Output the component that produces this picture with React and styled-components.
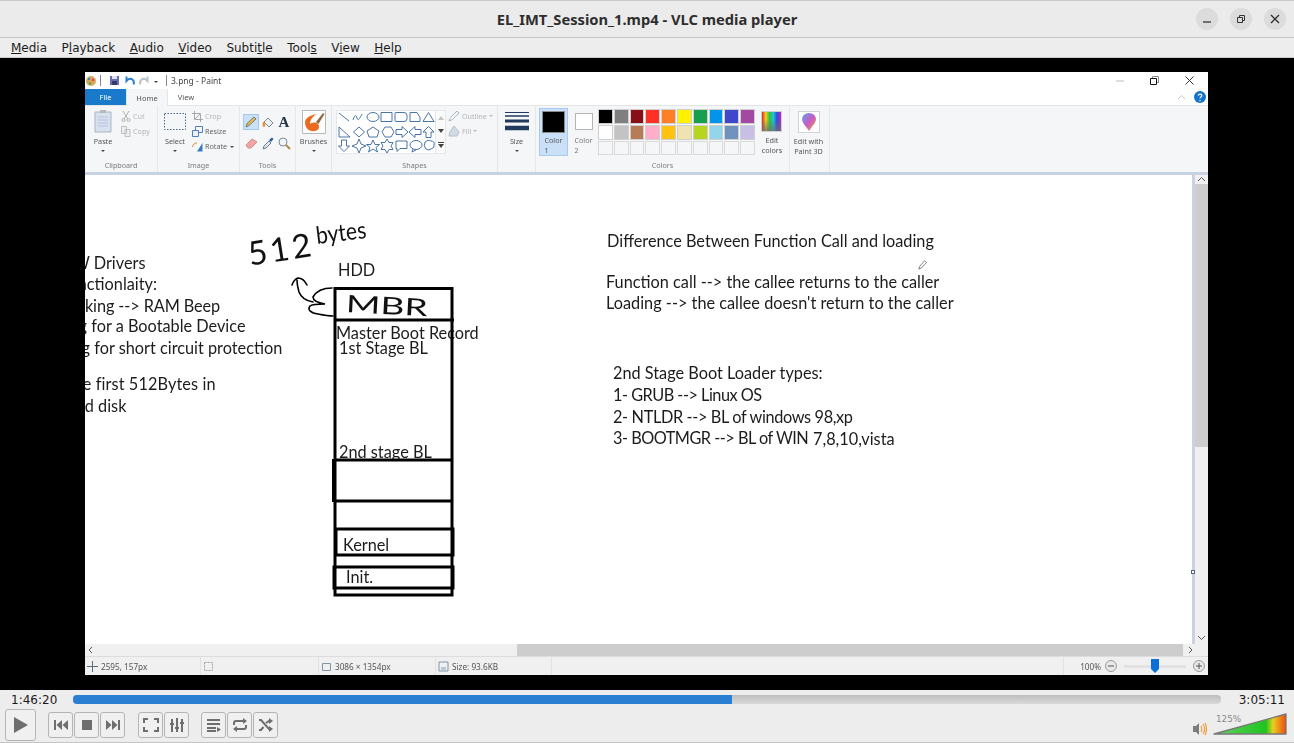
import React from 'react';
import styled, { createGlobalStyle } from 'styled-components';

const GlobalStyle = createGlobalStyle`
  html, body { margin: 0; padding: 0; background: #000; }
  body { width: 1294px; height: 743px; overflow: hidden; font-family: "DejaVu Sans", sans-serif; }
`;

const Player = styled.div`
  width: 1294px;
  height: 743px;
  display: flex;
  flex-direction: column;
  background: #ededed;
`;

/* ---- VLC window chrome ---- */
const TitleBar = styled.header`
  height: 38px;
  flex: none;
  box-sizing: border-box;
  border-top: 1px solid #c9c9c9;
  border-bottom: 1px solid #c4c4c4;
  background: #ebebeb;
  display: flex;
  align-items: center;
  justify-content: flex-end;
  position: relative;
  padding-right: 8px;
  gap: 12px;
`;
const WindowTitle = styled.div`
  position: absolute;
  left: 0;
  right: 0;
  text-align: center;
  font: bold 14.7px "Noto Sans", sans-serif;
  color: #2e2e2e;
`;
const RoundButton = styled.button`
  width: 22px;
  height: 22px;
  padding: 0;
  border: 0;
  border-radius: 50%;
  background: #dcdcdc;
  display: flex;
  align-items: center;
  justify-content: center;
`;
const MenuBar = styled.nav`
  height: 20px;
  flex: none;
  box-sizing: border-box;
  padding: 0 0 0 11px;
  display: flex;
  align-items: center;
  gap: 14.5px;
  background: #ededed;
  border-bottom: 1px solid #c8c8c8;
  font-size: 12px;
  color: #1c1c1c;
`;
const VideoArea = styled.main`
  flex: none;
  height: 632px;
  background: #000;
  box-sizing: border-box;
  padding: 14px 86px 15px 85px;
`;

/* ---- Paint window inside the video ---- */
const PaintWindow = styled.div`
  height: 100%;
  background: #fff;
  display: flex;
  flex-direction: column;
  font-family: "Noto Sans", sans-serif;
  filter: blur(0.3px);
  overflow: hidden;
`;
const QuickBar = styled.div`
  height: 17px;
  flex: none;
  display: flex;
  align-items: center;
  gap: 4px;
  font-size: 8.5px;
  color: #444;
`;
const QuickSep = styled.span`
  width: 1px;
  height: 11px;
  background: #888;
  margin: 0 ${p => p.$r}px 0 ${p => p.$l}px;
`;
const PaintTitle = styled.span`
  flex: 1;
`;
const PaintCtrls = styled.div`
  display: flex;
  align-items: center;
  gap: 26px;
  padding-right: 14px;
`;
const TabRow = styled.div`
  height: 17px;
  flex: none;
  display: flex;
  align-items: stretch;
  font-size: 7.5px;
  color: #555;
  border-bottom: 1px solid #e4e5e6;
  box-sizing: border-box;
`;
const Tab = styled.div`
  width: ${p => p.$w}px;
  display: flex;
  align-items: center;
  justify-content: center;
  background: ${p => (p.$file ? '#1979ca' : p.$active ? '#f5f6f7' : '#fff')};
  color: ${p => (p.$file ? '#fff' : '#555')};
  ${p => p.$active && 'border: 1px solid #e4e5e6; border-bottom: 0; border-top: 0; margin-bottom: -1px;'}
`;
const TabFill = styled.div`
  flex: 1;
  display: flex;
  align-items: center;
  justify-content: flex-end;
  gap: 8px;
  padding-right: 2px;
`;
const Ribbon = styled.div`
  height: 66px;
  flex: none;
  display: flex;
  background: #f5f6f7;
  border-bottom: 3px solid #c9d2e0;
  box-sizing: content-box;
`;
const Group = styled.section`
  width: ${p => p.$w}px;
  flex: none;
  box-sizing: border-box;
  border-right: 1px solid #e6e7e8;
  display: flex;
  flex-direction: column;
  position: relative;
`;
const GroupBody = styled.div`
  flex: 1;
  display: flex;
  padding: ${p => p.$pad || '2px 0 0 0'};
  min-height: 0;
`;
const GroupLabel = styled.div`
  height: 12px;
  line-height: 11px;
  text-align: center;
  font-size: 7.2px;
  color: #7b7b7b;
`;
const BigTool = styled.div`
  width: ${p => p.$w || 36}px;
  padding-top: ${p => p.$top || 0}px;
  display: flex;
  flex-direction: column;
  align-items: center;
  font-size: 7.2px;
  line-height: 9.5px;
  color: #555;
  text-align: center;
`;
const BigIcon = styled.div`
  height: 27px;
  display: flex;
  align-items: center;
  justify-content: center;
  margin-bottom: 2px;
`;
const LabelGap = styled.div`
  height: 4px;
  flex: none;
`;
const Caret = styled.span`
  display: block;
  flex: none;
  width: 0;
  height: 0;
  margin: ${p => p.$m || '3px auto 0'};
  border-left: 2px solid transparent;
  border-right: 2px solid transparent;
  border-top: 2px solid ${p => p.$c || '#444'};
`;
const SmallColumn = styled.div`
  display: flex;
  flex-direction: column;
  gap: 1px;
  padding-top: ${p => p.$top}px;
  margin-left: ${p => p.$ml || 0}px;
`;
const SmallTool = styled.div`
  height: 14px;
  display: flex;
  align-items: center;
  gap: 2px;
  font-size: 7.2px;
  color: ${p => (p.$off ? '#b4b4b4' : '#666')};
  white-space: nowrap;
`;
const ToolsGrid = styled.div`
  display: grid;
  grid-template-columns: 18px 16px 16px;
  grid-auto-rows: 17px;
  row-gap: 4px;
  padding: 7.5px 0 0 2px;
  justify-items: center;
  align-items: center;
`;
const PencilBox = styled.div`
  width: 16px;
  height: 16px;
  background: #c9e0f7;
  border: 1px solid #a3c8ec;
  box-sizing: border-box;
  display: flex;
  align-items: center;
  justify-content: center;
`;
const TextGlyph = styled.span`
  font: bold 15px "Liberation Serif", serif;
  color: #24344a;
`;
const Gallery = styled.div`
  width: 100px;
  height: 44px;
  background: #fff;
  border: 1px solid #e4e8ee;
  box-sizing: border-box;
  margin: 4px 0 0 4px;
`;
const GalleryScroll = styled.div`
  width: 10px;
  height: 44px;
  margin-top: 4px;
  background: #fafafa;
  border: 1px solid #e8e8e8;
  border-left: 0;
  box-sizing: border-box;
  display: flex;
  flex-direction: column;
  align-items: center;
  justify-content: space-around;
`;
const ColorOne = styled.div`
  width: 29px;
  height: 48px;
  margin: 2px 0 0 3px;
  box-sizing: border-box;
  background: #c9e0f7;
  border: 1px solid #a7cbee;
  display: flex;
  flex-direction: column;
  align-items: center;
  font-size: 7.2px;
  line-height: 10px;
  color: #555;
`;
const ColorTwo = styled(ColorOne)`
  width: 27px;
  margin-left: 2px;
  background: none;
  border-color: transparent;
  color: #777;
`;
const ColorPreview = styled.div`
  width: ${p => p.$s}px;
  height: ${p => p.$s}px;
  box-sizing: border-box;
  margin: ${p => (p.$s > 20 ? 2 : 4)}px 0 ${p => (p.$s > 20 ? 2 : 5)}px;
  background: ${p => p.$c};
  border: 1px solid ${p => (p.$s > 20 ? '#8a8a8a' : '#b5b5b5')};
`;
const Palette = styled.div`
  display: grid;
  grid-template-columns: repeat(10, 14.8px);
  grid-auto-rows: 14.8px;
  gap: 1px;
  margin: 3px 0 0 1px;
`;
const Swatch = styled.div`
  background: ${p => p.$c};
  border: 1px solid ${p => (p.$c === '#f5f6f7' ? '#d9d9d9' : '#cfcfcf')};
  box-sizing: border-box;
`;
const Rainbow = styled.div`
  width: 21px;
  height: 21px;
  flex: none;
  box-sizing: border-box;
  border: 1px solid #cfcfcf;
  background: linear-gradient(180deg, rgba(255,255,255,0) 40%, rgba(110,110,110,.75) 100%),
    linear-gradient(90deg, #e0242c, #f2d21c, #2bc13d, #1fc2d8, #3048d8, #c428c0);
`;
const Tile3D = styled.div`
  width: 22px;
  height: 22px;
  flex: none;
  box-sizing: border-box;
  background: #fff;
  border: 1px solid #d4d4d4;
  display: flex;
  align-items: center;
  justify-content: center;
`;

/* ---- Paint canvas ---- */
const Workspace = styled.div`
  flex: 1;
  min-height: 0;
  display: grid;
  grid-template-columns: 1fr 13px;
  background: #c9d2e0;
`;
const Viewport = styled.div`
  display: flex;
  flex-direction: column;
  min-height: 0;
`;
const CanvasClip = styled.div`
  flex: 1;
  min-height: 0;
  padding-right: 3px;
  position: relative;
`;
const Canvas = styled.div`
  position: relative;
  height: 100%;
  background: #fff;
  overflow: hidden;
  font-family: Lato, sans-serif;
  font-size: 16.3px;
  line-height: 20px;
  color: #1c1c1c;
`;
const Note = styled.div`
  position: absolute;
  left: ${p => p.$x}px;
  top: ${p => p.$y}px;
  white-space: nowrap;
  letter-spacing: ${p => p.$ls || 0}px;
`;
const Sketch = styled.svg`
  position: absolute;
  left: 0;
  top: 0;
`;
const PenCursor = styled.svg`
  position: absolute;
  left: 833px;
  top: 85px;
`;
const Scribble = styled.div`
  position: absolute;
  left: ${p => p.$x}px;
  top: ${p => p.$y}px;
  font: 400 ${p => p.$size}px/1 "Lato", sans-serif;
  color: #111;
  white-space: nowrap;
  transform: rotate(${p => p.$rot}deg) scaleX(${p => p.$sx || 1});
  transform-origin: left center;
  letter-spacing: ${p => p.$ls || 0}px;
`;
const Handle = styled.span`
  position: absolute;
  right: 0;
  top: 395px;
  width: 2px;
  height: 2px;
  background: #fff;
  border: 1px solid #55657a;
`;
const HScroll = styled.div`
  height: 12px;
  flex: none;
  background: #f0f0f0;
  display: flex;
  align-items: center;
  justify-content: space-between;
  position: relative;
  padding: 0 3px;
`;
const HThumb = styled.div`
  position: absolute;
  left: 432px;
  width: 666px;
  top: 0;
  bottom: 0;
  background: #cdcdcd;
`;
const VScroll = styled.div`
  background: #f0f0f0;
  display: flex;
  flex-direction: column;
  align-items: center;
  position: relative;
`;
const VThumb = styled.div`
  width: 100%;
  height: ${p => p.$h}px;
  background: #cdcdcd;
`;
const Ico = ({ w = 12, h = 12, children, ...rest }) => (
  <svg width={w} height={h} viewBox={`0 0 ${w} ${h}`} fill="none" {...rest}>{children}</svg>
);
const ArrowRight = styled(Ico)`
  position: relative;
  right: -1px;
`;
const ArrowDown = styled(Ico)`
  position: absolute;
  bottom: 14px;
`;
const StatusBar = styled.div`
  height: 19px;
  flex: none;
  box-sizing: border-box;
  border-top: 1px solid #dcdcdc;
  background: #f0f0f0;
  display: flex;
  font-size: 8.2px;
  color: #555;
`;
const StatusCell = styled.div`
  width: ${p => p.$w}px;
  flex: none;
  box-sizing: border-box;
  border-right: 1px solid #e2e2e2;
  display: flex;
  align-items: center;
  gap: 3px;
  padding-left: 2px;
`;
const ZoomCell = styled.div`
  flex: 1;
  display: flex;
  align-items: center;
  justify-content: flex-end;
  padding-right: 3px;
  gap: 4px;
`;
const ZoomTrack = styled.div`
  width: 62px;
  height: 3px;
  margin: 0 3px;
  background: #e2e2e2;
  position: relative;
`;
const ZoomKnob = styled.svg`
  position: absolute;
  left: 27px;
  top: -6px;
`;

/* ---- VLC controls ---- */
const Controls = styled.footer`
  flex: 1;
  display: flex;
  flex-direction: column;
  background: #ededed;
  box-sizing: border-box;
  border-bottom: 1px solid #c4c4c4;
`;
const SeekRow = styled.div`
  height: 19px;
  flex: none;
  display: flex;
  align-items: center;
  padding: 0 9px 0 11px;
  font-size: 12px;
  color: #1a1a1a;
`;
const SeekBar = styled.div`
  flex: 1;
  height: 9px;
  margin: 0 18px 0 16px;
  border-radius: 4px;
  overflow: hidden;
  background: linear-gradient(180deg, #bdbdbd, #d9d9d9);
`;
const SeekFill = styled.div`
  height: 100%;
  background: #2b7fd3;
`;
const ButtonRow = styled.div`
  flex: 1;
  display: flex;
  align-items: center;
  padding: 0 7px 1px 5px;
`;
const CtrlGroup = styled.div`
  display: flex;
  gap: 1px;
  margin-left: ${p => p.$ml || 0}px;
`;
const CtrlButton = styled.button`
  width: ${p => p.$big ? 31 : 25}px;
  height: ${p => p.$big ? 32 : 26}px;
  padding: 0;
  box-sizing: border-box;
  border: 1px solid #b5b5b5;
  border-radius: 3px;
  background: #f0f0f0;
  display: flex;
  align-items: center;
  justify-content: center;
`;
const VolumeWrap = styled.div`
  margin-left: auto;
  display: flex;
  align-items: flex-end;
  gap: 6px;
`;
const Speaker = styled(Ico)`
  margin-bottom: 1px;
`;
const VolumeMeter = styled.div`
  width: 74px;
  height: 22px;
  position: relative;
  margin-bottom: 2px;
`;
const VolumeLabel = styled.span`
  position: absolute;
  left: 3px;
  top: 1px;
  font: 8.8px "DejaVu Sans", sans-serif;
  color: #8a8a8a;
`;

const MENU = [
  ['M', 'edia'], ['P', 'l', 'ayback'], ['A', 'udio'], ['V', 'ideo'],
  ['Subti', 't', 'le'], ['Tool', 's', ''], ['V', 'i', 'ew'], ['H', 'elp'],
];

function MenuLabel({ parts }) {
  if (parts.length === 2) return <span><u>{parts[0]}</u>{parts[1]}</span>;
  const [a, b, c] = parts;
  return <span>{a}<u>{b}</u>{c}</span>;
}

const ROW1 = ['#000000', '#7f7f7f', '#880f18', '#ff3024', '#ff7f27', '#fff200', '#159f4f', '#0095ea', '#3f48cc', '#a349a4'];
const ROW2 = ['#ffffff', '#c3c3c3', '#b97a57', '#ffaec9', '#ffc20e', '#efe4b0', '#b5d61d', '#93d5ea', '#7092be', '#c8bfe7'];
const ROW3 = Array(10).fill('#f5f6f7');

const SHAPES = [
  'M2 2L12 10',
  'M16 9c2-6 3-5 4-2s2 2 5-4',
  'M30 6a6 4.5 0 1 0 12 0a6 4.5 0 1 0-12 0',
  'M44 1.500h11v9h-11z',
  'M59 1.500h8q3 0 3 3v3q0 3-3 3h-8q-1 0-1-1v-7q0-1 1-1z',
  'M73 10.500v-9h7l3 5v4z',
  'M86 10.500l5.500-9l5.500 9z',
  'M2 16v10h11z',
  'M22 16l5.500 5l-5.500 5l-5.500-5z',
  'M36 16l6 4l-2 6h-8l-2-6z',
  'M48 16h6l3 5l-3 5h-6l-3-5z',
  'M59 18.500h6v-3l6 5.500l-6 5.500v-3h-6z',
  'M84 18.500h-6v-3l-6 5.500l6 5.500v-3h6z',
  'M91.500 15.500l5.500 5.500h-3v5.500h-5v-5.500h-3z',
  'M7 42.500l5.500-5.500h-3v-6h-5v6h-3z',
  'M22 30l2 5l5 2l-5 2l-2 5l-2-5l-5-2l5-2z',
  'M36 31l2 4.500h4.500l-3.500 3l1.500 4.500l-4.500-3l-4.500 3l1.500-4.500l-3.500-3h4.500z',
  'M50 30l2 3.500h4l-2 3.500l2 3.500h-4l-2 3.500l-2-3.500h-4l2-3.500l-2-3.500h4z',
  'M59 32h11v7.500h-7l-3 3v-3h-1z',
  'M73 36a6 4.500 0 1 0 12 0a6 4.500 0 0 0-12 0m3 4l-1 3l4-2',
  'M88 33q3-3 6-1q4 0 3 4q1 3-3 4q-3 2-5 0q-3-3-1-7z',
];

export default function App() {
  return (
    <>
      <GlobalStyle />
      <Player>
        <TitleBar>
          <WindowTitle>EL_IMT_Session_1.mp4 - VLC media player</WindowTitle>
          <RoundButton aria-label="minimize">
            <Ico w={10} h={10}><path d="M1 8h8" stroke="#333" strokeWidth="1.3" /></Ico>
          </RoundButton>
          <RoundButton aria-label="restore">
            <Ico w={10} h={10}><path d="M1.500 3.500h5v5h-5zM3.500 3V1.500h5v5H7" stroke="#333" /></Ico>
          </RoundButton>
          <RoundButton aria-label="close">
            <Ico w={10} h={10}><path d="M1 1l8 8M9 1l-8 8" stroke="#333" strokeWidth="1.4" /></Ico>
          </RoundButton>
        </TitleBar>
        <MenuBar>
          {MENU.map((m, i) => <MenuLabel key={i} parts={m} />)}
        </MenuBar>

        <VideoArea>
          <PaintWindow>
            <QuickBar>
              <Ico w={12} h={12}>
                <circle cx="6" cy="6" r="5" fill="#d9a860" />
                <circle cx="4" cy="4" r="1.200" fill="#3f86c9" />
                <circle cx="8" cy="5" r="1.200" fill="#d44" />
                <circle cx="5" cy="8.500" r="1.200" fill="#4a4" />
              </Ico>
              <QuickSep $l={-1} $r={4} />
              <Ico w={11} h={11}><path d="M1 1h9v9H1z" fill="#6a6fb0" /><path d="M3 1h5v3H3z" fill="#dfe0f0" /><path d="M3 6h5v4H3z" fill="#333a70" /></Ico>
              <Ico w={11} h={11}><path d="M9.500 9.500c1.500-4-2-7-5.500-5L2.500 6V1.500" stroke="#2c7fd0" strokeWidth="2" /></Ico>
              <Ico w={11} h={11}><path d="M1.500 9.500c-1.500-4 2-7 5.500-5L8.500 6V1.500" stroke="#b7c2cc" strokeWidth="2" /></Ico>
              <Caret $m="2px 0 0" />
              <QuickSep $l={4} $r={0} />
              <PaintTitle>3.png - Paint</PaintTitle>
              <PaintCtrls>
                <Ico w={8} h={8}><path d="M0 4h8" stroke="#bbb" /></Ico>
                <Ico w={9} h={9}><path d="M.5 2.500h6v6h-6z" stroke="#111" /><path d="M2.500 2V.5h6v6H7" stroke="#888" /></Ico>
                <Ico w={9} h={9}><path d="M.5.5l8 8M8.500.5l-8 8" stroke="#333" /></Ico>
              </PaintCtrls>
            </QuickBar>
            <TabRow>
              <Tab $file $w={41}>File</Tab>
              <Tab $active $w={40}>Home</Tab>
              <Tab $w={36}>View</Tab>
              <TabFill>
                <Ico w={9} h={6}><path d="M1 5l3.500-3.500L8 5" stroke="#ccc" /></Ico>
                <Ico w={12} h={12}>
                  <circle cx="6" cy="6" r="6" fill="#1474cc" />
                  <path d="M4.300 4.600c.2-2 3.600-2 3.500 0c0 1.400-1.800 1.300-1.800 3M6 9v1.300" stroke="#fff" strokeWidth="1.100" />
                </Ico>
              </TabFill>
            </TabRow>
            <Ribbon>
              <Group $w={73}>
                <GroupBody>
                  <BigTool $w={36}>
                    <BigIcon>
                      <Ico w={18} h={23}>
                        <path d="M1 2h16v20H1z" fill="#d7e0ee" stroke="#aab6c6" />
                        <path d="M6 0h6v3H6z" fill="#b9b9b9" />
                        <path d="M4 7h10M4 10h10M4 13h10M4 16h10" stroke="#b5c4d8" />
                      </Ico>
                    </BigIcon>
                    Paste<Caret />
                  </BigTool>
                  <SmallColumn $top={1}>
                    <SmallTool $off>
                      <Ico w={10} h={12}><path d="M2 1l5 8M8 1L3 9" stroke="#b0b0b0" /><circle cx="2.500" cy="10" r="1.500" stroke="#b0b0b0" /><circle cx="7.500" cy="10" r="1.500" stroke="#b0b0b0" /></Ico>
                      Cut
                    </SmallTool>
                    <SmallTool $off>
                      <Ico w={10} h={12}><path d="M.5 1.500h5v7h-5zM4 4.500h5v7H4z" stroke="#c0c0c0" fill="#f0f0f0" /></Ico>
                      Copy
                    </SmallTool>
                  </SmallColumn>
                </GroupBody>
                <GroupLabel>Clipboard</GroupLabel>
              </Group>
              <Group $w={82}>
                <GroupBody>
                  <BigTool $w={34}>
                    <BigIcon>
                      <Ico w={22} h={17}><path d="M.5.5h21v16H.5z" stroke="#47679a" strokeDasharray="1.500 1.500" /></Ico>
                    </BigIcon>
                    Select<Caret />
                  </BigTool>
                  <SmallColumn $top={1}>
                    <SmallTool $off>
                      <Ico w={11} h={11}><path d="M2.500 0v8.500H11M0 2.500h8.500V11M3 8l5-5" stroke="#a8a8a8" /></Ico>
                      Crop
                    </SmallTool>
                    <SmallTool>
                      <Ico w={11} h={11}><path d="M3.500.5h7v6h-7z" stroke="#4d7fb8" /><path d="M.5 4.500h6v6h-6z" stroke="#4d7fb8" fill="#eef3f9" /></Ico>
                      Resize
                    </SmallTool>
                    <SmallTool>
                      <Ico w={11} h={11}><path d="M5 10.500L10.500 2v8.500z" fill="#3c79bd" /><path d="M.5 6C1 3 3 2 5 2" stroke="#e08a2a" /></Ico>
                      Rotate<Caret $m="1px 0 0 1px" />
                    </SmallTool>
                  </SmallColumn>
                </GroupBody>
                <GroupLabel>Image</GroupLabel>
              </Group>
              <Group $w={56}>
                <GroupBody $pad="0">
                  <ToolsGrid>
                    <PencilBox>
                      <Ico w={12} h={12}><path d="M1 11l1-3.500L9 1l2 2-7 6.500z" fill="#e7b84a" stroke="#55677d" strokeWidth=".8" /></Ico>
                    </PencilBox>
                    <Ico w={13} h={13}><path d="M6 2l5 5-4 4-5-5z" stroke="#7b8794" fill="#eef1f4" /><path d="M1 6c-1 3 0 5 1 5s2-2 0-5z" fill="#ef8a2c" /></Ico>
                    <TextGlyph>A</TextGlyph>
                    <Ico w={13} h={11}><path d="M1 7l6-6 5 3-6 6H3z" fill="#f1a5a5" stroke="#d88a8a" /></Ico>
                    <Ico w={12} h={13}><path d="M1 12l1-3 5-5 2 2-5 5z" fill="#dfe6ee" stroke="#6b7c90" /><path d="M7 3l3-2.500 1.500 1.500L9 5z" fill="#2a5f9e" /></Ico>
                    <Ico w={13} h={13}><circle cx="5" cy="5" r="4" stroke="#7d8b99" fill="#eef5fb" /><path d="M8 8l4 4" stroke="#b08a4a" strokeWidth="2" /></Ico>
                  </ToolsGrid>
                </GroupBody>
                <GroupLabel>Tools</GroupLabel>
              </Group>
              <Group $w={36}>
                <GroupBody>
                  <BigTool>
                    <BigIcon>
                      <Ico w={24} h={24}>
                        <path d="M.5.5h23v23H.5z" fill="#fff" stroke="#b9b9b9" />
                        <path d="M3 12c0 7 5 10 10 9 4-1 5-4 3-7-3-3-7-1-8 0 0-4 3-8 7-10-6 1-11 3-12 8z" fill="#ea6a1f" />
                        <path d="M14 12l7-9 1.500 1-6 10z" fill="#8d6a43" />
                      </Ico>
                    </BigIcon>
                    Brushes<Caret />
                  </BigTool>
                </GroupBody>
                <GroupLabel />
              </Group>
              <Group $w={166}>
                <GroupBody $pad="0">
                  <Gallery>
                    <Ico w={98} h={42}>
                      {SHAPES.map((d, i) => (
                        <path
                          key={i}
                          d={d}
                          stroke="#37679c"
                          strokeWidth=".9"
                          transform={i >= 14 ? 'translate(0 -2)' : undefined}
                        />
                      ))}
                    </Ico>
                  </Gallery>
                  <GalleryScroll>
                    <Ico w={6} h={4}><path d="M3 0l3 4H0z" fill="#c4c4c4" /></Ico>
                    <Ico w={6} h={4}><path d="M0 0h6L3 4z" fill="#444" /></Ico>
                    <Ico w={6} h={6}><path d="M0 .5h6" stroke="#444" /><path d="M0 2h6L3 6z" fill="#444" /></Ico>
                  </GalleryScroll>
                  <SmallColumn $top={3} $ml={2}>
                    <SmallTool $off>
                      <Ico w={12} h={12}><path d="M1 11l1.500-3.500L9 1l2 2-6.500 6.500z" stroke="#aeb8c4" /></Ico>
                      Outline<Caret $m="0" $c="#bbb" />
                    </SmallTool>
                    <SmallTool $off>
                      <Ico w={12} h={12}><path d="M6 1l5 6-2 4H1l1-4z" fill="#d3dbe6" stroke="#b4bfcc" /></Ico>
                      Fill<Caret $m="0" $c="#bbb" />
                    </SmallTool>
                  </SmallColumn>
                </GroupBody>
                <GroupLabel>Shapes</GroupLabel>
              </Group>
              <Group $w={38}>
                <GroupBody>
                  <BigTool $w={38}>
                    <BigIcon>
                      <Ico w={24} h={21}>
                        <path d="M0 1.500h24" stroke="#1f3a5c" />
                        <path d="M0 5h24" stroke="#1f3a5c" strokeWidth="1.500" />
                        <path d="M0 10h24" stroke="#1f3a5c" strokeWidth="3" />
                        <path d="M0 17h24" stroke="#1f3a5c" strokeWidth="4.500" />
                      </Ico>
                    </BigIcon>
                    Size<Caret />
                  </BigTool>
                </GroupBody>
                <GroupLabel />
              </Group>
              <Group $w={254}>
                <GroupBody $pad="0">
                  <ColorOne>
                    <ColorPreview $s={23} $c="#000" />
                    Color<br />1
                  </ColorOne>
                  <ColorTwo>
                    <ColorPreview $s={18} $c="#fff" />
                    Color<br />2
                  </ColorTwo>
                  <Palette>
                    {[...ROW1, ...ROW2, ...ROW3].map((c, i) => <Swatch key={i} $c={c} />)}
                  </Palette>
                  <BigTool $w={34} $top={5}>
                    <Rainbow />
                    <LabelGap />
                    Edit<br />colors
                  </BigTool>
                </GroupBody>
                <GroupLabel>Colors</GroupLabel>
              </Group>
              <Group $w={40}>
                <GroupBody $pad="5px 0 0 0">
                  <BigTool $w={37}>
                    <Tile3D>
                      <Ico w={14} h={18}>
                        <defs>
                          <linearGradient id="drop3d" x1="0" y1="0" x2="1" y2="1">
                            <stop offset="0" stopColor="#58a8e8" />
                            <stop offset=".5" stopColor="#c85bc8" />
                            <stop offset="1" stopColor="#f59c2a" />
                          </linearGradient>
                        </defs>
                        <path d="M7 18C4 13 0 10 0 6a7 6 0 0 1 14 0c0 4-4 7-7 12z" fill="url(#drop3d)" />
                      </Ico>
                    </Tile3D>
                    <LabelGap />
                    Edit with<br />Paint 3D
                  </BigTool>
                </GroupBody>
                <GroupLabel />
              </Group>
            </Ribbon>
            <Workspace>
              <Viewport>
                <CanvasClip>
                  <Canvas>
                    <Note $x={-24.5} $y={78}>HW Drivers</Note>
                    <Note $x={-25} $y={99}>Functionlaity:</Note>
                    <Note $x={-36} $y={121} $ls={-0.1}>Checking --&gt; RAM Beep</Note>
                    <Note $x={-64} $y={141}>Checking for a Bootable Device</Note>
                    <Note $x={-61} $y={163}>Checking for short circuit protection</Note>
                    <Note $x={-21} $y={199} $ls={0.1}>The first 512Bytes in</Note>
                    <Note $x={-23} $y={221}>hard disk</Note>

                    <Note $x={253} $y={85}>HDD</Note>
                    <Note $x={251} $y={148}>Master Boot Record</Note>
                    <Note $x={254} $y={163}>1st Stage BL</Note>
                    <Note $x={254} $y={267}>2nd stage BL</Note>
                    <Note $x={258} $y={360}>Kernel</Note>
                    <Note $x={261} $y={392}>Init.</Note>

                    <Note $x={522} $y={56}>Difference Between Function Call and loading</Note>
                    <Note $x={521} $y={97}>Function call --&gt; the callee returns to the caller</Note>
                    <Note $x={521} $y={118}>Loading --&gt; the callee doesn't return to the caller</Note>
                    <Note $x={528} $y={188}>2nd Stage Boot Loader types:</Note>
                    <Note $x={528} $y={210} $ls={-0.5}>1- GRUB --&gt; Linux OS</Note>
                    <Note $x={528} $y={232} $ls={-0.36}>2- NTLDR --&gt; BL of windows 98,xp</Note>
                    <Note $x={528} $y={253} $ls={-0.5}>3- BOOTMGR --&gt; BL of WIN</Note>
                    <Note $x={728} $y={254}>7,8,10,vista</Note>

                    <Scribble $x={163} $y={62} $size={33} $rot={-9} $ls={3}>512</Scribble>
                    <Scribble $x={231} $y={48} $size={24} $rot={-7} $sx={0.88}>bytes</Scribble>
                    <Scribble $x={261} $y={116} $size={24} $rot={3} $sx={1.55}>MBR</Scribble>

                    <Sketch width={400} height={440} viewBox="0 0 400 440" fill="none" stroke="#000">
                      <g strokeWidth="3">
                        <path d="M250 113.500h117v306.500h-117z" />
                        <path d="M249 145h120" />
                        <path d="M249 285h118" />
                        <path d="M249 326h118" />
                        <path d="M251 354h117v26h-117z" />
                        <path d="M249 392h119v21h-119z" />
                      </g>
                      <path d="M249 284v43" strokeWidth="4" />
                      <path
                        d="M247 113C240 113 232 115 228 122C228 126 234 128 240 129C234 129 227 129 225 131C222 135 226 138 233 139C238 140 243 141 248 141"
                        strokeWidth="1.600"
                        strokeLinecap="round"
                      />
                      <path
                        d="M228 127C221 126 216 122 214 117C213 113 212 110 212 105M207 110C208 107 210 104 213 103C217 103 220 106 222 110"
                        strokeWidth="1.600"
                        strokeLinecap="round"
                      />
                    </Sketch>
                    <PenCursor width={9} height={10} viewBox="0 0 9 10" fill="none">
                      <path d="M.8 9.200l1-3L6.500.8l2 1.700L3.600 7.800z" fill="#fff" stroke="#666" strokeWidth=".8" />
                    </PenCursor>
                  </Canvas>
                  <Handle />
                </CanvasClip>
                <HScroll>
                  <Ico w={5} h={8}><path d="M4 1L1 4l3 3" stroke="#555" /></Ico>
                  <HThumb />
                  <ArrowRight w={5} h={8}><path d="M1 1l3 3-3 3" stroke="#555" /></ArrowRight>
                </HScroll>
              </Viewport>
              <VScroll>
                <Ico w={9} h={9}><path d="M1 6l3.500-3.500L8 6" stroke="#555" /></Ico>
                <VThumb $h={263} />
                <ArrowDown w={9} h={9}><path d="M1 3l3.500 3.500L8 3" stroke="#555" /></ArrowDown>
              </VScroll>
            </Workspace>
            <StatusBar>
              <StatusCell $w={116}>
                <Ico w={11} h={11}><path d="M5.500 0v11M0 5.500h11" stroke="#5a6a7a" /></Ico>
                2595, 157px
              </StatusCell>
              <StatusCell $w={118}>
                <Ico w={11} h={11}><path d="M1.500 1.500h8v8h-8z" stroke="#9aa7b5" strokeDasharray="2 1" /></Ico>
              </StatusCell>
              <StatusCell $w={117}>
                <Ico w={11} h={11}><path d="M1.500 2.500h8v7h-8z" stroke="#7f93a9" /></Ico>
                3086 × 1354px
              </StatusCell>
              <StatusCell $w={116}>
                <Ico w={11} h={11}><path d="M1 1h9v9H1z" stroke="#7f93a9" /><path d="M3 6h5v4H3z" fill="#b9c6d5" /></Ico>
                Size: 93.6KB
              </StatusCell>
              <StatusCell $w={512} />
              <ZoomCell>
                100%
                <Ico w={12} h={12}><circle cx="6" cy="6" r="5.500" fill="#e8e8e8" stroke="#999" /><path d="M3 6h6" stroke="#555" /></Ico>
                <ZoomTrack>
                  <ZoomKnob width={8} height={14}><path d="M0 0h8v10l-4 4-4-4z" fill="#0a6fd6" /></ZoomKnob>
                </ZoomTrack>
                <Ico w={12} h={12}><circle cx="6" cy="6" r="5.500" fill="#e8e8e8" stroke="#999" /><path d="M3 6h6M6 3v6" stroke="#555" /></Ico>
              </ZoomCell>
            </StatusBar>
          </PaintWindow>
        </VideoArea>

        <Controls>
          <SeekRow>
            1:46:20
            <SeekBar><SeekFill style={{ width: `${(660 / 1149) * 100}%` }} /></SeekBar>
            3:05:11
          </SeekRow>
          <ButtonRow>
            <CtrlButton $big aria-label="play">
              <Ico w={14} h={16}><path d="M0 0l14 8-14 8z" fill="#6e6e6e" /></Ico>
            </CtrlButton>
            <CtrlGroup $ml={12}>
              <CtrlButton aria-label="previous">
                <Ico w={16} h={10}><path d="M1 0h2v10H1zM9 0v10L3.500 5zM15 0v10L9.500 5z" fill="#6e6e6e" /></Ico>
              </CtrlButton>
              <CtrlButton aria-label="stop">
                <Ico w={10} h={10}><path d="M0 0h10v10H0z" fill="#6e6e6e" /></Ico>
              </CtrlButton>
              <CtrlButton aria-label="next">
                <Ico w={16} h={10}><path d="M15 0h-2v10h2zM7 0v10l5.500-5zM1 0v10l5.500-5z" fill="#6e6e6e" /></Ico>
              </CtrlButton>
            </CtrlGroup>
            <CtrlGroup $ml={13}>
              <CtrlButton aria-label="fullscreen">
                <Ico w={16} h={14}><path d="M1 5V1h4M11 1h4v4M15 9v4h-4M5 13H1V9" stroke="#6e6e6e" strokeWidth="2" /></Ico>
              </CtrlButton>
              <CtrlButton aria-label="extended settings">
                <Ico w={16} h={14}><path d="M3 1v13M8 0v14M13 1v13" stroke="#6e6e6e" strokeWidth="2" /><path d="M1 5h4v2H1zM6 9h4v2H6zM11 4h4v2h-4z" fill="#6e6e6e" /></Ico>
              </CtrlButton>
            </CtrlGroup>
            <CtrlGroup $ml={12}>
              <CtrlButton aria-label="playlist">
                <Ico w={16} h={14}><path d="M1 1h13v2H1zM1 5h13v2H1zM1 9h9v2H1zM1 12h9v2H1z" fill="#6e6e6e" /><path d="M11 9l4 2.500-4 2.500z" fill="#6e6e6e" /></Ico>
              </CtrlButton>
              <CtrlButton aria-label="loop">
                <Ico w={16} h={14}><path d="M2 7V5c0-1 1-2 2-2h7M14 7v2c0 1-1 2-2 2H5" stroke="#6e6e6e" strokeWidth="2" /><path d="M11 0l4 3-4 3zM5 8l-4 3 4 3z" fill="#6e6e6e" /></Ico>
              </CtrlButton>
              <CtrlButton aria-label="random">
                <Ico w={16} h={14}><path d="M1 2h2l8 9h1M1 12h2l2.500-3M8 5l3-2h1" stroke="#6e6e6e" strokeWidth="2" /><path d="M11 0l4 3-4 3zM11 8l4 3-4 3z" fill="#6e6e6e" /></Ico>
              </CtrlButton>
            </CtrlGroup>
            <VolumeWrap>
              <Speaker w={14} h={14}>
                <path d="M0 4h3l3-3v12l-3-3H0z" fill="#7d7d7d" />
                <path d="M8 4c1 2 1 4 0 6M10 2c2 3 2 7 0 10M12 1c2 4 2 8 0 12" stroke="#f0992e" strokeWidth="1.100" />
              </Speaker>
              <VolumeMeter>
                <svg width="74" height="22" viewBox="0 0 74 22">
                  <defs>
                    <linearGradient id="volGrad" x1="0" y1="0" x2="1" y2="0">
                      <stop offset="0" stopColor="#66d066" />
                      <stop offset=".72" stopColor="#1fc41f" />
                      <stop offset=".82" stopColor="#e8d020" />
                      <stop offset="1" stopColor="#f04a10" />
                    </linearGradient>
                  </defs>
                  <path d="M1 21L73 1v20z" fill="url(#volGrad)" stroke="#777" strokeWidth="1.300" strokeLinejoin="round" />
                </svg>
                <VolumeLabel>125%</VolumeLabel>
              </VolumeMeter>
            </VolumeWrap>
          </ButtonRow>
        </Controls>
      </Player>
    </>
  );
}
